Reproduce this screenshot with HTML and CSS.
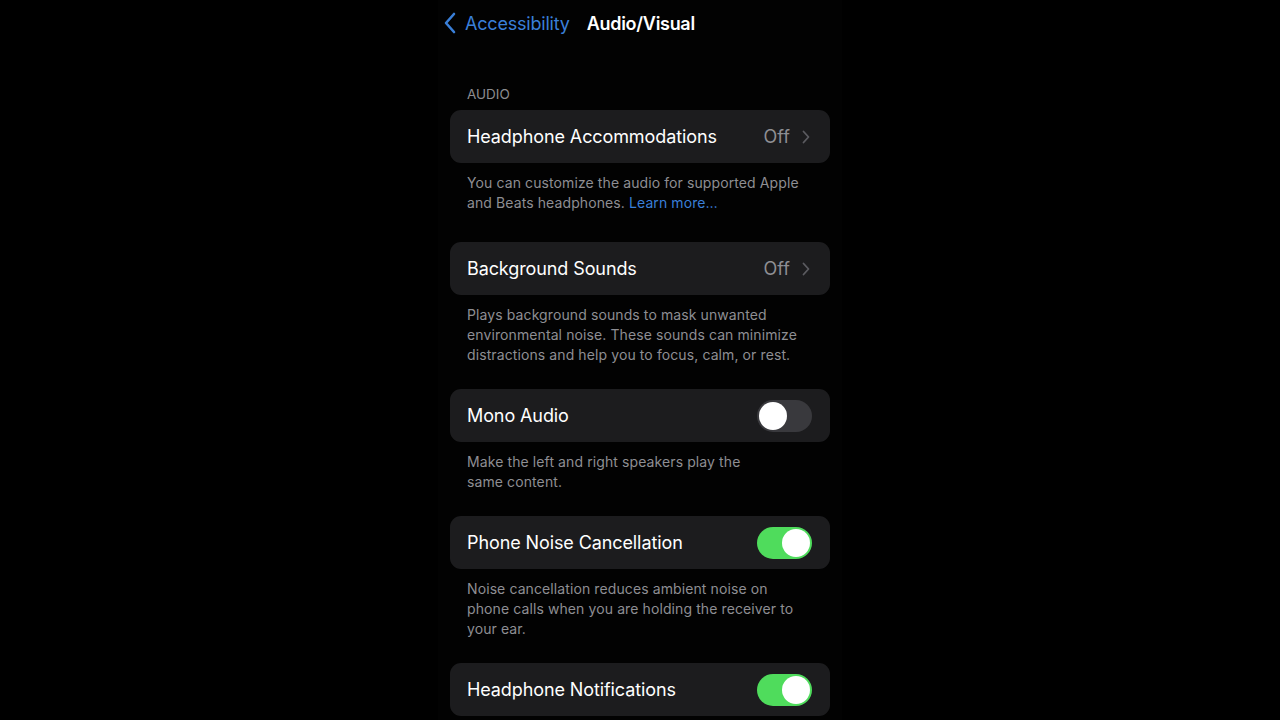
FILE: index.html
```html
<!DOCTYPE html>
<html lang="en">
<head>
<meta charset="utf-8">
<title>Audio/Visual</title>
<link rel="stylesheet" href="styles.css">
</head>
<body>
<div class="screen">
  <div class="column">
    <header class="nav">
      <svg class="back-chev" width="14" height="22" viewBox="0 0 14 22"><path d="M11 2 L3 11 L11 20" fill="none" stroke="#3a7fd8" stroke-width="2.6" stroke-linecap="round" stroke-linejoin="round"/></svg>
      <span class="back-label">Accessibility</span>
      <span class="nav-title">Audio/Visual</span>
    </header>

    <div class="section-label">AUDIO</div>

    <div class="card">
      <span class="row-title">Headphone Accommodations</span>
      <span class="row-detail">Off<svg class="chev" width="8" height="14" viewBox="0 0 8 14"><path d="M1.5 1.5 L6.5 7 L1.5 12.5" fill="none" stroke="#5b5b60" stroke-width="1.8" stroke-linecap="round" stroke-linejoin="round"/></svg></span>
    </div>
    <p class="footer first">You can customize the audio for supported Apple and Beats headphones. <span class="link">Learn more…</span></p>

    <div class="card">
      <span class="row-title">Background Sounds</span>
      <span class="row-detail">Off<svg class="chev" width="8" height="14" viewBox="0 0 8 14"><path d="M1.5 1.5 L6.5 7 L1.5 12.5" fill="none" stroke="#5b5b60" stroke-width="1.8" stroke-linecap="round" stroke-linejoin="round"/></svg></span>
    </div>
    <p class="footer">Plays background sounds to mask unwanted environmental noise. These sounds can minimize distractions and help you to focus, calm, or rest.</p>

    <div class="card">
      <span class="row-title">Mono Audio</span>
      <span class="toggle"><span class="knob"></span></span>
    </div>
    <p class="footer">Make the left and right speakers play the<br>same content.</p>

    <div class="card">
      <span class="row-title">Phone Noise Cancellation</span>
      <span class="toggle on"><span class="knob"></span></span>
    </div>
    <p class="footer">Noise cancellation reduces ambient noise on phone calls when you are holding the receiver to your ear.</p>

    <div class="card">
      <span class="row-title">Headphone Notifications</span>
      <span class="toggle on"><span class="knob"></span></span>
    </div>
  </div>
</div>
</body>
</html>
```

FILE: styles.css
```css
* { box-sizing: border-box; }
html, body {
  margin: 0;
  padding: 0;
  background: #000;
  width: 1280px;
  height: 720px;
  overflow: hidden;
  font-family: Inter, "Noto Sans", "Liberation Sans", sans-serif;
}
.screen {
  display: flex;
  justify-content: center;
  height: 720px;
}
.column {
  width: 404px;
  height: 720px;
  background: #020202;
  display: flex;
  flex-direction: column;
  padding: 0 12px;
}
.nav {
  height: 46px;
  display: flex;
  align-items: center;
  margin-left: -7px;
}
.back-chev { margin-right: 8px; }
.back-label {
  color: #3a7fd8;
  font-size: 18px;
  letter-spacing: -0.2px;
  margin-right: 17px;
}
.nav-title {
  color: #fff;
  font-size: 18px;
  font-weight: 600;
  letter-spacing: -0.3px;
}
.section-label {
  margin-top: 40px;
  padding-left: 17px;
  height: 16px;
  line-height: 16px;
  font-size: 13.5px;
  color: #8c8c90;
  margin-bottom: 8px;
}
.card {
  height: 53px;
  border-radius: 11px;
  background: #1c1c1e;
  display: flex;
  align-items: center;
  justify-content: space-between;
  padding: 0 18px 0 17px;
  flex-shrink: 0;
}
.row-title {
  color: #fff;
  font-size: 18px;
  letter-spacing: -0.1px;
}
.row-detail {
  color: #8e8e93;
  font-size: 18px;
  display: flex;
  align-items: center;
  gap: 12px;
  margin-right: 2px;
}
.footer {
  margin: 10px 0 24px;
  padding: 0 24px 0 17px;
  font-size: 14px;
  line-height: 20px;
  color: #8e8e93;
  letter-spacing: 0.1px;
}
.footer.first { margin-bottom: 29px; }
.link { color: #3a7fd8; }
.toggle {
  width: 55px;
  height: 32px;
  border-radius: 16px;
  background: #39393d;
  position: relative;
  flex-shrink: 0;
}
.knob {
  position: absolute;
  top: 2px;
  left: 2px;
  width: 28px;
  height: 28px;
  border-radius: 50%;
  background: #fff;
}
.toggle.on { background: #4fdc5c; }
.toggle.on .knob { left: 25px; }
```
